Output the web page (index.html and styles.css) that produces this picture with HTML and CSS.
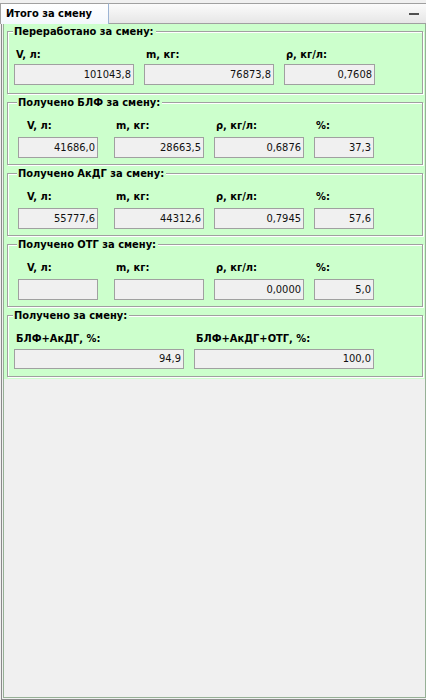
FILE: index.html
```html
<!DOCTYPE html>
<html lang="ru">
<head>
<meta charset="utf-8">
<link rel="stylesheet" href="styles.css">
</head>
<body>
<div class="window">
  <div class="header">
    <div class="tab">Итого за смену</div>
    <div class="header-rest"><span class="minimize"></span></div>
  </div>
  <div class="panel">
    <div class="panel-inner">
      <div class="green">
        <div class="group g1">
          <div class="title">Переработано за смену:</div>
          <div class="grid cols-3a">
            <div class="cell"><div class="lbl">V, л:</div><div class="box">101043,8</div></div>
            <div class="cell"><div class="lbl">m, кг:</div><div class="box">76873,8</div></div>
            <div class="cell"><div class="lbl">ρ, кг/л:</div><div class="box">0,7608</div></div>
          </div>
        </div>
        <div class="group g2">
          <div class="title">Получено БЛФ за смену:</div>
          <div class="grid cols-4">
            <div class="cell"><div class="lbl first">V, л:</div><div class="box">41686,0</div></div>
            <div class="cell"><div class="lbl">m, кг:</div><div class="box">28663,5</div></div>
            <div class="cell"><div class="lbl">ρ, кг/л:</div><div class="box">0,6876</div></div>
            <div class="cell"><div class="lbl">%:</div><div class="box">37,3</div></div>
          </div>
        </div>
        <div class="group g2">
          <div class="title">Получено АкДГ за смену:</div>
          <div class="grid cols-4">
            <div class="cell"><div class="lbl first">V, л:</div><div class="box">55777,6</div></div>
            <div class="cell"><div class="lbl">m, кг:</div><div class="box">44312,6</div></div>
            <div class="cell"><div class="lbl">ρ, кг/л:</div><div class="box">0,7945</div></div>
            <div class="cell"><div class="lbl">%:</div><div class="box">57,6</div></div>
          </div>
        </div>
        <div class="group g2">
          <div class="title">Получено ОТГ за смену:</div>
          <div class="grid cols-4">
            <div class="cell"><div class="lbl first">V, л:</div><div class="box"></div></div>
            <div class="cell"><div class="lbl">m, кг:</div><div class="box"></div></div>
            <div class="cell"><div class="lbl">ρ, кг/л:</div><div class="box">0,0000</div></div>
            <div class="cell"><div class="lbl">%:</div><div class="box">5,0</div></div>
          </div>
        </div>
        <div class="group g5">
          <div class="title">Получено за смену:</div>
          <div class="grid cols-2">
            <div class="cell"><div class="lbl">БЛФ+АкДГ, %:</div><div class="box">94,9</div></div>
            <div class="cell"><div class="lbl">БЛФ+АкДГ+ОТГ, %:</div><div class="box">100,0</div></div>
          </div>
        </div>
      </div>
    </div>
  </div>
</div>
</body>
</html>
```
FILE: styles.css
```css
* { box-sizing: border-box; }
html, body { margin: 0; padding: 0; }
body {
  width: 426px;
  height: 700px;
  background: #f0f0f0;
  font-family: "DejaVu Sans Condensed", "DejaVu Sans", sans-serif;
  font-size: 11px;
  color: #000;
  overflow: hidden;
}
.window { display: flex; flex-direction: column; height: 700px; }
.header {
  display: flex;
  height: 24px;
  padding-top: 3px;
  flex: none;
}
.tab {
  width: 109px;
  border-top: 1px solid #a0a0a0;
  border-left: 1px solid #a0a0a0;
  border-right: 1px solid #9cb4d4;
  background: linear-gradient(#ffffff, #f3f7fc);
  font-weight: bold;
  padding: 3px 0 0 5px;
  line-height: 14px;
}
.header-rest {
  flex: 1;
  border-top: 1px solid #a0a0a0;
  border-bottom: 1px solid #a0a0a0;
  background: linear-gradient(#fbfbfb, #e6e6e6);
  display: flex;
  justify-content: flex-end;
  align-items: center;
  padding-right: 7px;
}
.minimize {
  width: 10px;
  height: 2px;
  background: #505050;
  margin-top: 1px;
}
.panel {
  flex: 1;
  margin-left: 1px;
  border-left: 1px solid #8a8a8a;
  border-bottom: 1px solid #8a8a8a;
  display: flex;
}
.panel-inner {
  flex: 1;
  margin-left: 1px;
  border-left: 1px solid #96b096;
  border-right: 1px solid #96b096;
  border-bottom: 1px solid #96b096;
  margin-bottom: 1px;
  background: #f0f0f0;
}
.green {
  background: #ccffcc;
  padding: 7px 2px 2px 3px;
  display: flex;
  flex-direction: column;
  gap: 8px;
}
.group {
  height: 63px;
  border: 1px solid #a0a0a0;
  box-shadow: inset 1px 1px 0 #fff, 1px 1px 0 #fff;
  padding: 0 0 0 6px;
}
.title {
  width: fit-content;
  margin-top: -7px;
  margin-left: -1px;
  padding: 0 2px 0 1px;
  background: #ccffcc;
  font-weight: bold;
  line-height: 13px;
}
.grid {
  display: grid;
  margin-top: 10px;
}
.cols-3a { grid-template-columns: 120px 130px 91px; column-gap: 10px; }
.g1 .box { margin-top: 3px; }
.g2 { padding-left: 10px; }
.g2 .grid { margin-top: 10px; grid-template-columns: 80px 16px 90px 10px 90px 10px 60px; column-gap: 0; }
.g2 .cell:nth-child(1) { grid-column: 1; }
.g2 .cell:nth-child(2) { grid-column: 3; }
.g2 .cell:nth-child(3) { grid-column: 5; }
.g2 .cell:nth-child(4) { grid-column: 7; }
.g2 .box { margin-top: 5px; height: 21px; }
.cols-2 { grid-template-columns: 170px 180px; column-gap: 10px; }
.g5 { height: 62px; }
.lbl {
  font-weight: bold;
  line-height: 13px;
  padding-left: 2px;
  white-space: nowrap;
}
.lbl.first { padding-left: 9px; }
.box {
  margin-top: 4px;
  height: 21px;
  border: 1px solid #a0a0a0;
  background: #f0f0f0;
  text-align: right;
  padding-right: 2px;
  line-height: 19px;
  color: #111;
}
.g5 .box { height: 20px; line-height: 18px; }
```
